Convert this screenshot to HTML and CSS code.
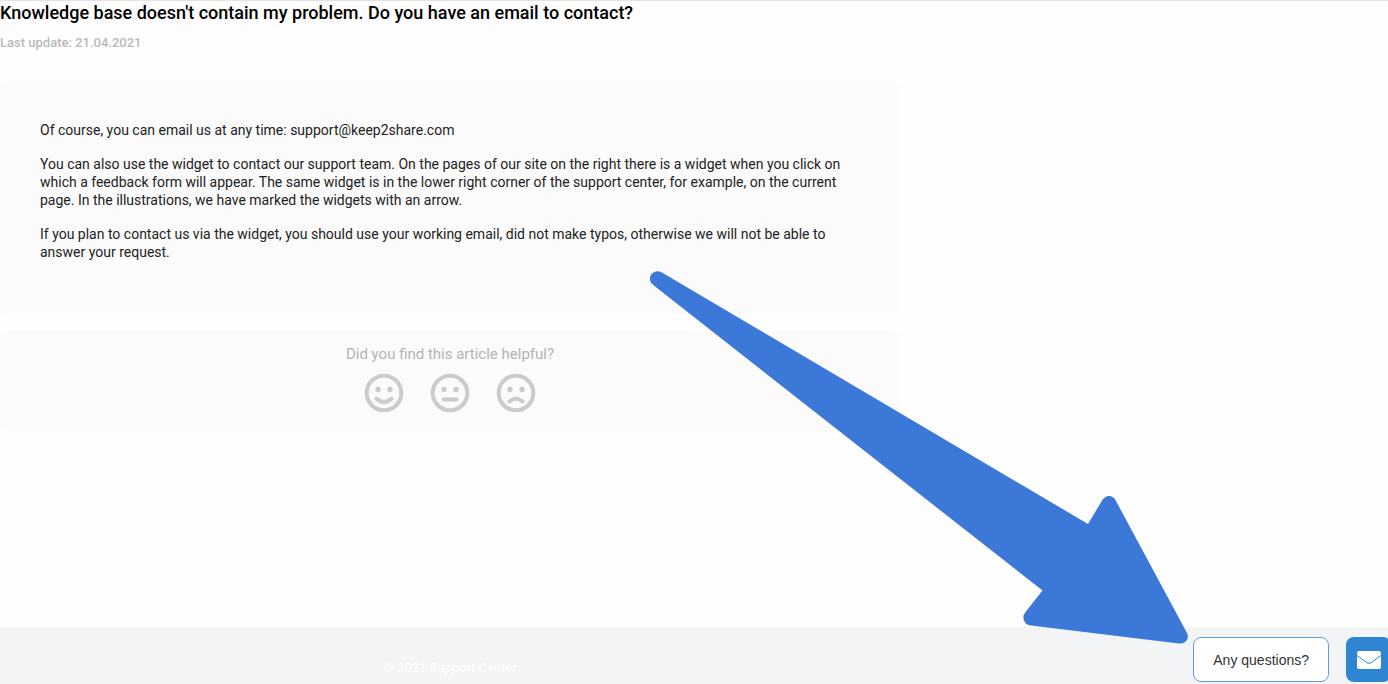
FILE: index.html
```html
<!DOCTYPE html>
<html lang="en">
<head>
<meta charset="utf-8">
<title>Support Center</title>
<link rel="stylesheet" href="styles.css">
</head>
<body>
<main class="main">
  <h1 class="title">Knowledge base doesn't contain my problem. Do you have an email to contact?</h1>
  <p class="updated">Last update: 21.04.2021</p>
  <article class="card article">
    <p>Of course, you can email us at any time: support@keep2share.com</p>
    <p>You can also use the widget to contact our support team. On the pages of our site on the right there is a widget when you click on which a feedback form will appear. The same widget is in the lower right corner of the support center, for example, on the current page. In the illustrations, we have marked the widgets with an arrow.</p>
    <p>If you plan to contact us via the widget, you should use your working email, did not make typos, otherwise we will not be able to answer your request.</p>
  </article>
  <section class="card rating">
    <h2 class="rating-title">Did you find this article helpful?</h2>
    <div class="faces">
      <button class="face" type="button" aria-label="Helpful">
        <svg viewBox="0 0 40 40"><circle class="line" cx="20" cy="20" r="17.3"/><circle class="dot" cx="14" cy="16.5" r="2.7"/><circle class="dot" cx="26" cy="16.5" r="2.7"/><path class="line" d="M12.300 25.500Q20 32.500 27.700 25.500"/></svg>
      </button>
      <button class="face" type="button" aria-label="Neutral">
        <svg viewBox="0 0 40 40"><circle class="line" cx="20" cy="20" r="17.3"/><circle class="dot" cx="14" cy="16.5" r="2.7"/><circle class="dot" cx="26" cy="16.5" r="2.7"/><path class="line" d="M13.500 26.500H26.500"/></svg>
      </button>
      <button class="face" type="button" aria-label="Not helpful">
        <svg viewBox="0 0 40 40"><circle class="line" cx="20" cy="20" r="17.3"/><circle class="dot" cx="14" cy="16.5" r="2.7"/><circle class="dot" cx="26" cy="16.5" r="2.7"/><path class="line" d="M13.500 28.500Q20 22.500 26.500 28.500"/></svg>
      </button>
    </div>
  </section>
</main>
<footer class="footer">
  <p class="copyright">© 2021 Support Center</p>
</footer>
<svg class="arrow" viewBox="650 270 540 375" aria-hidden="true">
  <path d="M661.5 272.3L1088 524L1101.500 501.500Q1104.500 496 1109 496Q1113.500 496 1116 501L1187 633Q1189 637.500 1186.500 640.500Q1184 644 1179 643.500L1031 625.500Q1025.500 625 1023.800 620Q1022.500 615.500 1025.500 612L1042.500 590.500L653.500 285.300A7.300 7.300 0 0 1 661.500 272.300Z"/>
</svg>
<div class="widget">
  <button class="ask" type="button">Any questions?</button>
  <button class="mail" type="button" aria-label="Send us a message">
    <svg viewBox="0 0 24 18"><rect class="envelope" x="0" y="0" width="24" height="18" rx="2"/><path class="flap" d="M0 4.500L10 11.800Q12 13 14 11.800L24 4.500"/></svg>
  </button>
</div>
</body>
</html>
```
FILE: styles.css
```css
* {
  box-sizing: border-box;
}

body {
  margin: 0;
  min-height: 100vh;
  display: flex;
  flex-direction: column;
  border-top: 1px solid #e3e3e6;
  background: #fefefe;
  color: #222;
  font: 14px/18px Roboto, "Liberation Sans", sans-serif;
}

p,
h1,
h2 {
  margin: 0;
}

button {
  padding: 0;
  border: 0;
  background: none;
  font: inherit;
  cursor: pointer;
}

.main {
  flex: 1;
  width: 100%;
  max-width: 900px;
}

.title {
  color: #000;
  font-size: 18px;
  font-weight: 500;
  line-height: 23px;
}

.updated {
  margin: 10px 0 28px;
  color: #b9b9b9;
  font-size: 13px;
  font-weight: 500;
}

.card {
  border-radius: 8px;
  background: #fbfbfb;
}

.article {
  display: grid;
  gap: 16px;
  padding: 41px 50px 53px 40px;
}

.rating {
  margin-top: 17px;
  padding: 14px 0 19px;
  color: #b3b3b3;
}

.rating-title {
  font-size: 15px;
  font-weight: 400;
  text-align: center;
}

.faces {
  display: flex;
  justify-content: center;
  gap: 26px;
  margin-top: 10px;
}

.face svg {
  display: block;
  width: 40px;
  height: 40px;
}

.line {
  fill: none;
  stroke: #cbcbcb;
  stroke-width: 4;
  stroke-linecap: round;
}

.dot {
  fill: #cbcbcb;
}

.footer {
  min-height: 57px;
  padding-top: 32px;
  background: #f3f4f6;
}

.copyright {
  max-width: 900px;
  color: #fff;
  font-size: 13px;
  text-align: center;
}

.arrow {
  position: absolute;
  top: 270px;
  left: 650px;
  width: 540px;
  height: 375px;
  fill: #3c78d8;
  pointer-events: none;
}

.widget {
  position: fixed;
  right: -3px;
  bottom: 2px;
  display: flex;
  align-items: center;
  gap: 17px;
}

.ask {
  height: 45px;
  padding: 0 19px;
  border: 1px solid #5c9fdc;
  border-radius: 8px;
  background: #fff;
  color: #333;
  font-family: "Liberation Sans", Arial, sans-serif;
  font-size: 14px;
}

.mail {
  display: grid;
  place-items: center;
  width: 45px;
  height: 45px;
  border-radius: 8px;
  background: #2e86d2;
}

.mail svg {
  width: 24px;
  height: 18px;
}

.envelope {
  fill: #fff;
}

.flap {
  fill: none;
  stroke: #2e86d2;
  stroke-width: 1;
}
```
